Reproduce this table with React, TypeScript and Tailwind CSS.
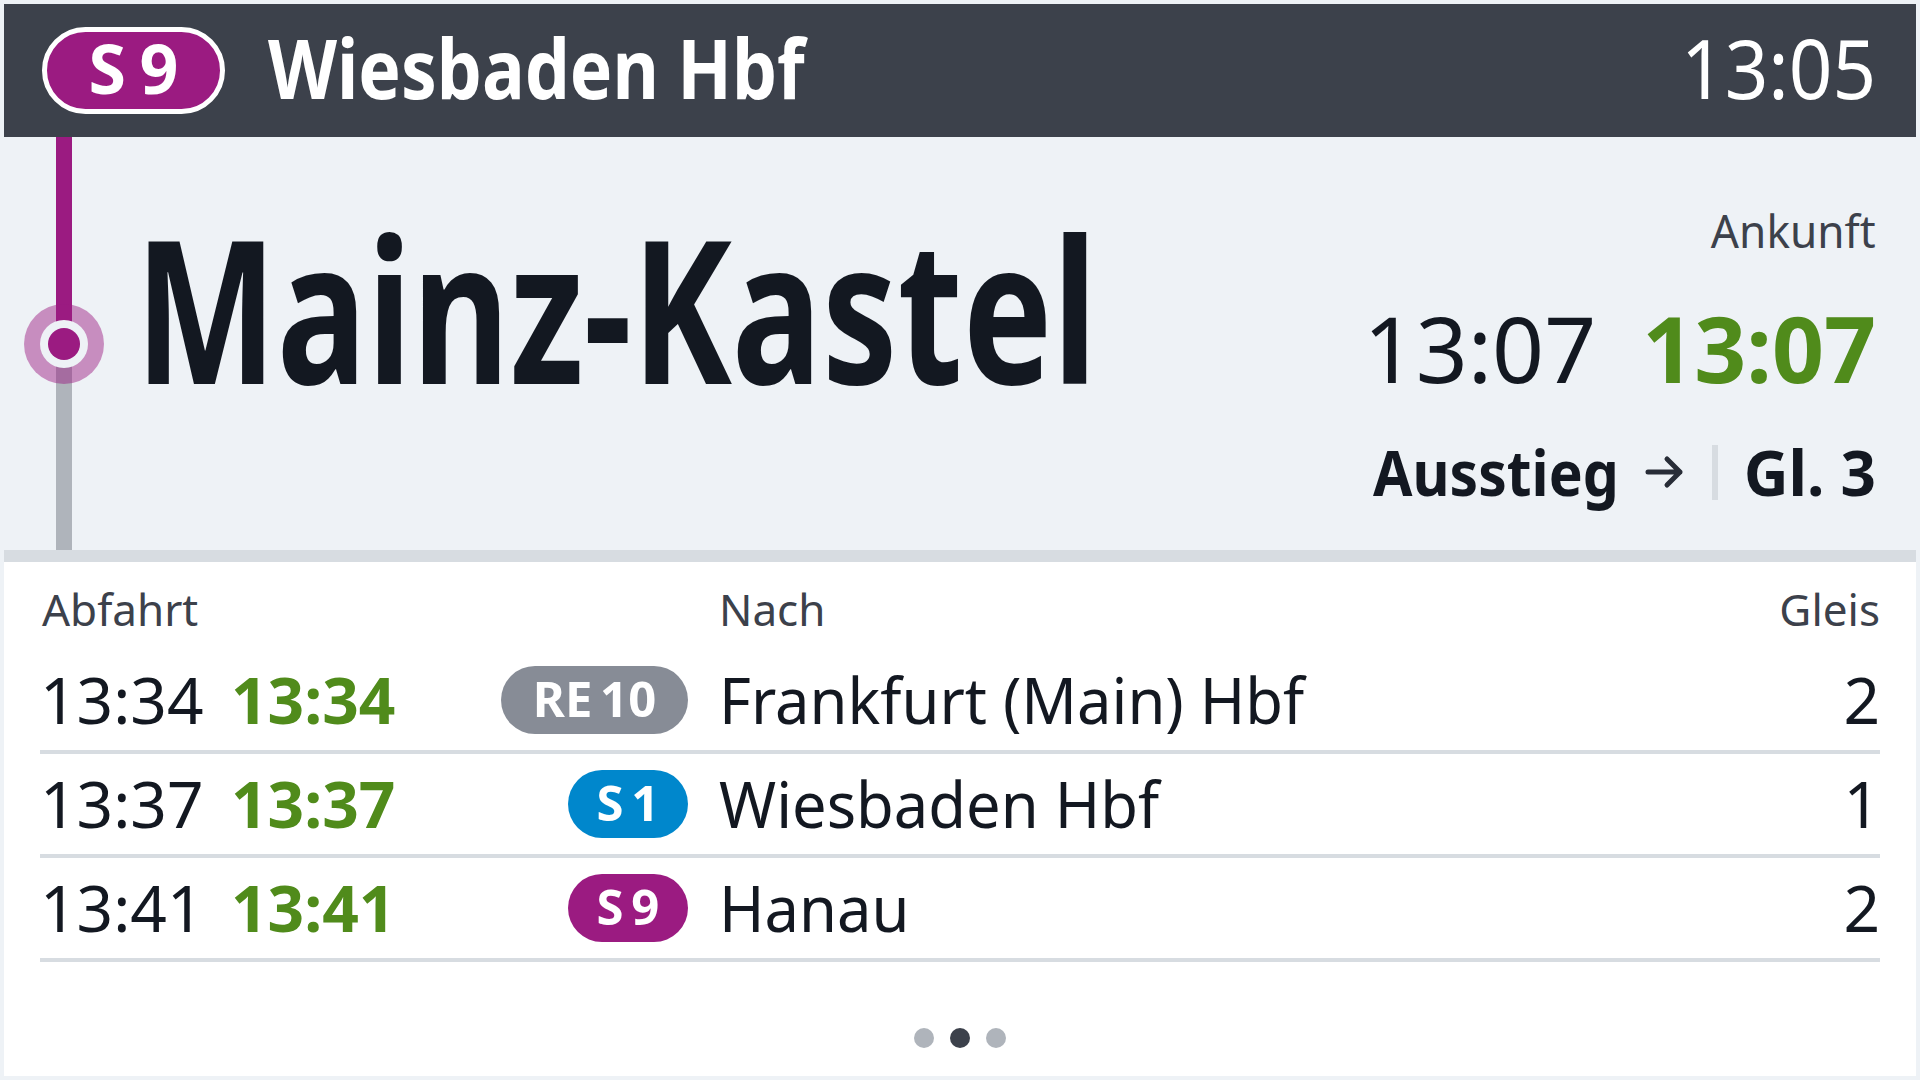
import React from "react";

interface Departure {
  planned: string;
  actual: string;
  line: string;
  lineClass: string;
  destination: string;
  platform: string;
}

const departures: Departure[] = [
  {
    planned: "13:34",
    actual: "13:34",
    line: "RE 10",
    lineClass: "bg-[#878c96] w-[187px]",
    destination: "Frankfurt (Main) Hbf",
    platform: "2",
  },
  {
    planned: "13:37",
    actual: "13:37",
    line: "S 1",
    lineClass: "bg-[#0087cc] w-[120px]",
    destination: "Wiesbaden Hbf",
    platform: "1",
  },
  {
    planned: "13:41",
    actual: "13:41",
    line: "S 9",
    lineClass: "bg-[#9b1b81] w-[120px]",
    destination: "Hanau",
    platform: "2",
  },
];

const RouteLine: React.FC = () => (
  <svg width="124" height="413" viewBox="0 0 124 413" className="shrink-0">
    <rect x="52" y="0" width="16" height="207" fill="#9b1b81" />
    <rect x="52" y="207" width="16" height="206" fill="#afb4bb" />
    <circle cx="60" cy="207" r="40" fill="#9b1b81" fillOpacity="0.47" />
    <circle cx="60" cy="207" r="24" fill="#eef2f6" />
    <circle cx="60" cy="207" r="16" fill="#9b1b81" />
  </svg>
);

const ArrowRight: React.FC = () => (
  <svg width="40" height="34" viewBox="0 0 40 34" className="shrink-0">
    <path
      d="M3 17 H35 M22 4 L35 17 L22 30"
      fill="none"
      stroke="#282d37"
      strokeWidth="5"
      strokeLinecap="round"
      strokeLinejoin="round"
    />
  </svg>
);

export default function App() {
  return (
    <div className="w-[1920px] h-[1080px] bg-[#eef2f6] p-1 flex flex-col font-['Noto_Sans',sans-serif] text-[#131821]">
      {/* Header */}
      <div className="h-[133px] shrink-0 bg-[#3c414b] flex items-center pl-[38px] pr-[40px] text-white">
        <div className="w-[183px] h-[87px] shrink-0 rounded-full border-[5px] border-white bg-[#9b1b81] flex items-center justify-center">
          <span className="text-[68px] leading-none font-bold [word-spacing:-4px] mb-[6px]">
            S 9
          </span>
        </div>
        <span className="ml-[43px] w-[536px] whitespace-nowrap origin-left scale-x-[0.86] text-[83px] leading-[83px] font-bold mb-[9px]">
          Wiesbaden Hbf
        </span>
        <span className="ml-auto whitespace-nowrap origin-right scale-x-[0.92] text-[83px] leading-[83px] mb-[9px]">
          13:05
        </span>
      </div>

      {/* Current stop */}
      <div className="h-[413px] shrink-0 flex">
        <RouteLine />
        <div className="flex-1 flex justify-between pt-[70px] pr-[40px] pl-[7px]">
          <h1 className="w-[945px] whitespace-nowrap origin-left scale-x-[0.752] text-[200px] leading-[200px] font-bold">
            Mainz-Kastel
          </h1>
          <div className="flex flex-col items-end">
            <span className="whitespace-nowrap origin-right scale-x-[0.96] text-[46px] leading-[46px] text-[#3c414b]">
              Ankunft
            </span>
            <div className="mt-[50px] flex gap-[46px] text-[91px] leading-[91px]">
              <span>13:07</span>
              <span className="font-bold text-[#508b1b]">13:07</span>
            </div>
            <div className="mt-[47px] flex items-center text-[62px] leading-[62px] font-bold whitespace-nowrap">
              <span className="w-[246px] origin-left scale-x-[0.92]">Ausstieg</span>
              <span className="ml-[26px]">
                <ArrowRight />
              </span>
              <span className="ml-[27px] w-[6px] h-[55px] bg-[#d7dce1]" />
              <span className="ml-[26px]">Gl. 3</span>
            </div>
          </div>
        </div>
      </div>

      <div className="h-[12px] shrink-0 bg-[#d7dce1]" />

      {/* Departures */}
      <div className="flex-1 bg-white px-[36px] flex flex-col">
        <div className="h-[88px] pt-[24px] flex text-[44px] leading-[46px] text-[#3c414b]">
          <span className="w-[648px] pl-[2px]">Abfahrt</span>
          <span className="ml-[31px]">Nach</span>
          <span className="ml-auto">Gleis</span>
        </div>

        {departures.map((d) => (
          <div
            key={d.planned}
            className="h-[104px] flex items-center border-b-4 border-[#d7dce1] text-[64px] leading-[64px]"
          >
            <div className="w-[648px] flex items-center">
              <span className="w-[191px]">{d.planned}</span>
              <span className="font-bold text-[#508b1b]">{d.actual}</span>
              <span
                className={`ml-auto h-[68px] rounded-full flex items-center justify-center text-white text-[49px] leading-none font-bold [word-spacing:-5px] ${d.lineClass}`}
              >
                <span className="mb-[4px]">{d.line}</span>
              </span>
            </div>
            <span className="ml-[31px] flex-1 whitespace-nowrap origin-left scale-x-[0.96]">
              {d.destination}
            </span>
            <span className="text-right">{d.platform}</span>
          </div>
        ))}

        <div className="mt-[66px] flex justify-center gap-[16px]">
          <span className="w-[20px] h-[20px] rounded-full bg-[#afb4bb]" />
          <span className="w-[20px] h-[20px] rounded-full bg-[#3c414b]" />
          <span className="w-[20px] h-[20px] rounded-full bg-[#afb4bb]" />
        </div>
      </div>
    </div>
  );
}
